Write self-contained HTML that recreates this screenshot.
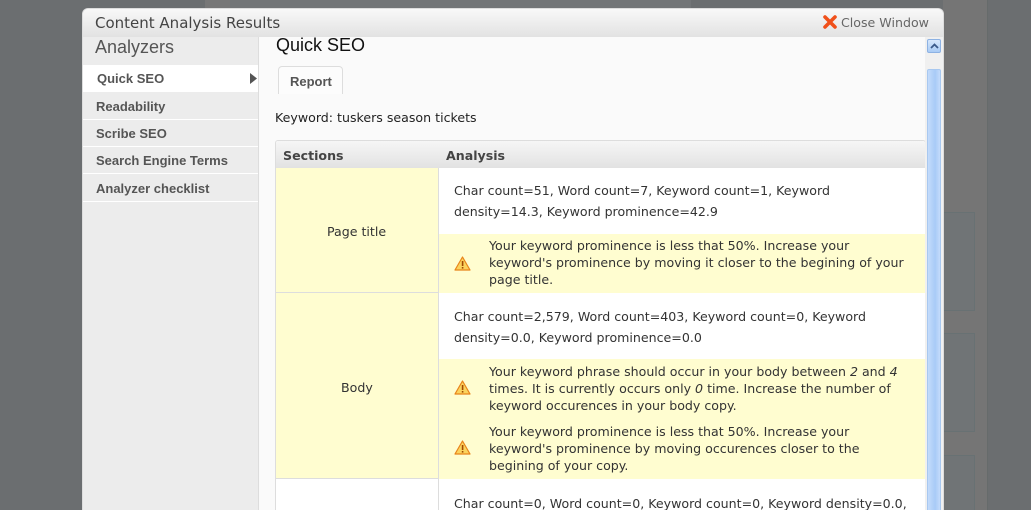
<!DOCTYPE html>
<html style="overflow:hidden"><head><style>
*{margin:0;padding:0;box-sizing:border-box}
html,body{width:1031px;height:510px;overflow:hidden}
body{background:#6b6e70;position:relative;font-family:"DejaVu Sans",Verdana,sans-serif}
.abs{position:absolute}
.modal{left:82px;top:8px;width:862px;height:502px;background:#fafafa;border-radius:6px 6px 0 0;overflow:hidden;border:1px solid #ddd;border-bottom:none}
.hdr{left:0;top:0;width:862px;height:28px;background:linear-gradient(#f8f8f8,#e2e2e2)}
.side{left:0;top:28px;width:176px;height:480px;background:#ececec;border-right:1px solid #ddd}
.item{position:absolute;left:0;width:175px;height:27px;font:bold 13px "Liberation Sans",Arial,sans-serif;color:#555;padding-left:13px;line-height:27px;border-bottom:1px solid #fff}
.cell{position:absolute;font-size:12.6px;color:#333;line-height:21px}
.warn{position:absolute;left:163px;width:486px;background:#fffdd0}
.ico{position:absolute;left:15px}
</style></head><body>
<div class="abs" style="left:205px;top:0;width:486px;height:8px;background:#777"></div>
<div class="abs" style="left:230px;top:0;width:461px;height:8px;background:#727577"></div>
<div class="abs" style="left:943px;top:0;width:44px;height:510px;background:#757575"></div>
<div class="abs" style="left:987px;top:0;width:1px;height:510px;background:#666b6b"></div>
<div class="abs" style="left:943px;top:212px;width:32px;height:99px;border:1px solid #687173;border-left:none;background:#707476"></div>
<div class="abs" style="left:943px;top:333px;width:32px;height:99px;border:1px solid #687173;border-left:none;background:#707476"></div>
<div class="abs" style="left:943px;top:455px;width:32px;height:60px;border:1px solid #687173;border-left:none;background:#707476"></div>

<div class="abs modal">
 <div class="abs hdr">
  <div class="abs" style="left:12px;top:5px;font:15px 'DejaVu Sans',sans-serif;color:#444">Content Analysis Results</div>
  <svg class="abs" style="left:740px;top:6px" width="14" height="14" viewBox="0 0 14 14"><path d="M2 2L12 12M12 2L2 12" stroke="#f0501a" stroke-width="3.6" stroke-linecap="round"/></svg>
  <div class="abs" style="left:758px;top:6px;font-size:12.6px;color:#666">Close Window</div>
 </div>
 <div class="abs side">
  <div class="abs" style="left:12px;top:0;font:18px 'Liberation Sans',Arial,sans-serif;color:#555">Analyzers</div>
  <div class="item" style="top:28px;background:#fff;padding-left:14px">Quick SEO<svg style="position:absolute;left:167px;top:8px" width="7" height="11"><path d="M0 0L7 5.5L0 11Z" fill="#555"/></svg></div>
  <div class="item" style="top:56px">Readability</div>
  <div class="item" style="top:83px">Scribe SEO</div>
  <div class="item" style="top:110px">Search Engine Terms</div>
  <div class="item" style="top:138px">Analyzer checklist</div>
 </div>
 <div class="abs" style="left:193px;top:26px;font:18px 'Liberation Sans',Arial,sans-serif;color:#111">Quick SEO</div>
 <div class="abs" style="left:195px;top:57px;width:65px;height:28px;border:1px solid #ddd;border-bottom:none;border-radius:4px 4px 0 0;background:#fcfcfc;font:bold 13px 'Liberation Sans',Arial,sans-serif;color:#555;padding:7px 0 0 11px">Report</div>
 <div class="abs" style="left:192px;top:101px;font-size:12.6px;color:#222">Keyword: tuskers season tickets</div>
 <div class="abs" style="left:192px;top:131px;width:651px;height:380px;border:1px solid #ddd;border-radius:3px 3px 0 0;background:#fff;overflow:hidden">
  <div class="abs" style="left:0;top:0;width:651px;height:27px;background:linear-gradient(#f6f6f6,#e2e2e2);font:bold 12.6px 'DejaVu Sans',sans-serif;color:#444">
   <span class="abs" style="left:7px;top:7px">Sections</span><span class="abs" style="left:170px;top:7px">Analysis</span></div>
  <div class="abs" style="left:0;top:27px;width:163px;height:125px;background:#fffdd0;border-bottom:1px solid #ddd"></div>
  <div class="abs" style="left:0;top:152px;width:163px;height:186px;background:#fffdd0;border-bottom:1px solid #ddd"></div>
  <div class="abs" style="left:162px;top:27px;width:1px;height:360px;background:#ddd"></div>
  <div class="cell" style="left:51px;top:80px">Page title</div>
  <div class="cell" style="left:65px;top:236px">Body</div>
  <div class="cell" style="left:178px;top:39px">Char count=51, Word count=7, Keyword count=1, Keyword<br>density=14.3, Keyword prominence=42.9</div>
  <div class="warn" style="top:93px;height:59px"><svg class="ico" style="top:22px" width="17" height="15"><path d="M8.5 1L16 14H1Z" fill="#fbd35e" stroke="#e8841a" stroke-width="1.2" stroke-linejoin="round"/><rect x="7.8" y="5" width="1.6" height="5" fill="#a04a00"/><rect x="7.8" y="11" width="1.6" height="1.6" fill="#a04a00"/></svg>
   <div class="cell" style="left:50px;top:3px;width:418px;line-height:17px">Your keyword prominence is less that 50%. Increase your keyword's prominence by moving it closer to the begining of your page title.</div></div>
  <div class="cell" style="left:178px;top:165px">Char count=2,579, Word count=403, Keyword count=0, Keyword<br>density=0.0, Keyword prominence=0.0</div>
  <div class="warn" style="top:218px;height:120px">
   <svg class="ico" style="top:21px" width="17" height="15"><path d="M8.5 1L16 14H1Z" fill="#fbd35e" stroke="#e8841a" stroke-width="1.2" stroke-linejoin="round"/><rect x="7.8" y="5" width="1.6" height="5" fill="#a04a00"/><rect x="7.8" y="11" width="1.6" height="1.6" fill="#a04a00"/></svg>
   <div class="cell" style="left:50px;top:4px;width:418px;line-height:17px">Your keyword phrase should occur in your body between <i>2</i> and <i>4</i> times. It is currently occurs only <i>0</i> time. Increase the number of keyword occurences in your body copy.</div>
   <svg class="ico" style="top:81px" width="17" height="15"><path d="M8.5 1L16 14H1Z" fill="#fbd35e" stroke="#e8841a" stroke-width="1.2" stroke-linejoin="round"/><rect x="7.8" y="5" width="1.6" height="5" fill="#a04a00"/><rect x="7.8" y="11" width="1.6" height="1.6" fill="#a04a00"/></svg>
   <div class="cell" style="left:50px;top:64px;width:418px;line-height:17px">Your keyword prominence is less that 50%. Increase your keyword's prominence by moving occurences closer to the begining of your copy.</div>
  </div>
  <div class="cell" style="left:178px;top:352px;white-space:nowrap">Char count=0, Word count=0, Keyword count=0, Keyword density=0.0,</div>
 </div>
 <div class="abs" style="left:842px;top:28px;width:18px;height:482px;background:#f0f0f0"></div>
 <div class="abs" style="left:844px;top:30px;width:14px;height:14px;background:linear-gradient(#d8e8fc,#a9cbf5);border:1px solid #8db2e3;border-radius:2px"><svg style="position:absolute;left:2px;top:3px" width="9" height="6"><path d="M1 5L4.5 1.5L8 5" stroke="#3b5a8a" stroke-width="1.8" fill="none"/></svg></div>
 <div class="abs" style="left:844px;top:60px;width:14px;height:450px;background:linear-gradient(90deg,#c4dbfb,#a8cbf7 60%,#c4dbfb);border:1px solid #a8c8f0;border-radius:2px"></div>
</div>
</body></html>
